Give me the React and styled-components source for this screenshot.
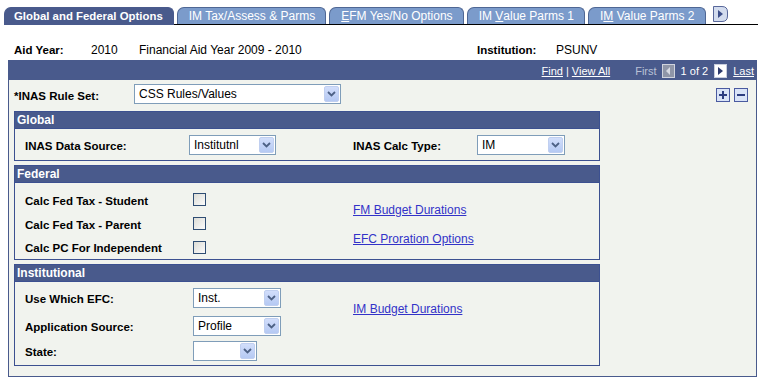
import React from 'react';
import styled, { createGlobalStyle } from 'styled-components';

const GlobalStyle = createGlobalStyle`
	body {
		margin: 0;
		background: #ffffff;
		font-family: Arial, 'Liberation Sans', sans-serif;
		color: #000;
	}
`;

const NAVY = '#495a8c';

const Page = styled.div`
	padding-top: 7px;
	width: 767px;
`;

const TabBar = styled.div`
	display: flex;
	align-items: flex-end;
	margin-left: 4px;
	width: 754px;
	height: 17px;
	border-bottom: 1px solid #000;
`;

const Tab = styled.div`
	box-sizing: border-box;
	height: ${({ $active }) => ($active ? '18px' : '17px')};
	margin-bottom: ${({ $active }) => ($active ? '-1px' : '0')};
	margin-right: 3px;
	display: flex;
	align-items: center;
	padding: ${({ $active }) => ($active ? '0 10px 1px 9px' : '0 10px 0 11px')};
	border: 1px solid ${({ $active }) => ($active ? NAVY : '#4f6794')};
	border-bottom: none;
	border-radius: 7px 6px 0 0;
	background: ${({ $active }) => ($active ? NAVY : '#7b9bcb')};
	color: #fff;
	font-size: ${({ $active }) => ($active ? '11.4px' : '12px')};
	font-weight: ${({ $active }) => ($active ? 'bold' : 'normal')};
	white-space: nowrap;

	u {
		text-decoration: underline;
	}
`;

const TabScroll = styled.div`
	margin: 0 0 2px 4px;
	display: flex;
`;

const InfoRow = styled.div`
	display: flex;
	align-items: center;
	height: 16px;
	margin-top: 17px;
	padding-left: 14px;
	font-size: 12px;
`;

const InfoLabel = styled.span`
	width: ${({ $w }) => $w}px;
	font-size: 11.5px;
	font-weight: bold;
`;

const InfoValue = styled.span`
	width: ${({ $w }) => ($w ? `${$w}px` : 'auto')};
`;

const Panel = styled.div`
	box-sizing: border-box;
	margin: 2px 0 0 8px;
	width: 749px;
	border: 1px solid ${NAVY};
	background: #f1f3ee;
`;

const PanelHeader = styled.div`
	height: 19px;
	background: ${NAVY};
	display: flex;
	align-items: center;
	justify-content: flex-end;
	padding-right: 2px;
	font-size: 11px;
	color: #fff;
	gap: 3px;

	a {
		color: #fff;
		text-decoration: underline;
	}
`;

const Muted = styled.span`
	color: #b9c1d6;
	margin-left: 22px;
	margin-right: 2px;
`;

const PanelBody = styled.div`
	padding: 4px 8px 10px 5px;
`;

const RuleRow = styled.div`
	display: flex;
	align-items: center;
	height: 20px;
`;

const RuleLabel = styled.span`
	width: 120px;
	font-size: 11.5px;
	font-weight: bold;
	padding-top: 3px;
`;

const RowIcons = styled.div`
	margin-left: auto;
	display: flex;
	gap: 4px;
	align-self: flex-start;
	margin-top: 4px;
`;

const Group = styled.div`
	width: 586px;
	box-sizing: border-box;
	border: 1px solid #3c5090;
	margin-top: ${({ $top }) => $top}px;
`;

const GroupHeader = styled.div`
	height: 16px;
	line-height: 16px;
	background: ${NAVY};
	border-bottom: 1px solid #3c5090;
	color: #fff;
	font-size: 12px;
	font-weight: bold;
	padding-left: 2px;
`;

const GroupBody = styled.div`
	display: flex;
	padding-left: 10px;
	height: ${({ $h }) => $h}px;
`;

const LeftCol = styled.div`
	width: 328px;
	display: flex;
	flex-direction: column;
	padding-top: ${({ $pt }) => $pt}px;
`;

const RightCol = styled.div`
	display: flex;
	flex-direction: column;
	align-items: flex-start;
	padding-top: ${({ $pt }) => $pt}px;
	gap: 15px;
`;

const Field = styled.div`
	display: flex;
	align-items: center;
	height: ${({ $h }) => $h || 20}px;
	margin-top: ${({ $mt }) => $mt || 0}px;
`;

const Label = styled.span`
	width: ${({ $w }) => $w}px;
	font-size: 11.5px;
	font-weight: bold;
	padding-top: 2px;
	white-space: nowrap;
`;

const SelectBox = styled.div`
	box-sizing: border-box;
	width: ${({ $w }) => $w}px;
	height: ${({ $h }) => $h || 20}px;
	border: 1px solid #7f9db9;
	background: #fff;
	display: flex;
	align-items: center;
	padding: 0 1px 0 4px;
	font-size: 12px;
`;

const SelectText = styled.span`
	flex: 1;
`;

const SelectButton = styled.span`
	width: 15px;
	height: 16px;
	border-radius: 2px;
	background: linear-gradient(#d2defb, #b5c9f3);
	border: 1px solid #c0cff0;
	box-sizing: border-box;
	display: flex;
	align-items: center;
	justify-content: center;
`;

const Checkbox = styled.span`
	box-sizing: border-box;
	width: 13px;
	height: 13px;
	border: 1px solid #2f4d73;
	background: linear-gradient(135deg, #dcdcd6, #fbfbfb);
`;

const Link = styled.a`
	color: #3232c8;
	text-decoration: underline;
	font-size: 12px;
	line-height: 14px;
	cursor: pointer;
`;

const Chevron = () => (
	<svg width="9" height="6" viewBox="0 0 9 6">
		<path d="M1 1 L4.5 4.5 L8 1" fill="none" stroke="#4d6185" strokeWidth="1.8" />
	</svg>
);

const Select = ({ value, w, h }) => (
	<SelectBox $w={w} $h={h}>
		<SelectText>{value}</SelectText>
		<SelectButton>
			<Chevron />
		</SelectButton>
	</SelectBox>
);

const NavArrow = ({ dir }) =>
	dir === 'left' ? (
		<svg width="13" height="14" viewBox="0 0 13 14">
			<rect x="0.5" y="0.5" width="12" height="13" fill="#8f96a8" stroke="#d0d4de" />
			<path d="M8 3 L4 7 L8 11 Z" fill="#d6d9e2" />
		</svg>
	) : (
		<svg width="13" height="14" viewBox="0 0 13 14">
			<rect x="0.5" y="0.5" width="12" height="13" fill="#ffffff" stroke="#c8cede" />
			<path d="M4 3 L9 7 L4 11 Z" fill="#2e3b6e" />
		</svg>
	);

const SquareIcon = ({ minus }) => (
	<svg width="14" height="14" viewBox="0 0 14 14">
		<rect x="0.5" y="0.5" width="13" height="13" fill="#d9e3f7" stroke="#4a5aa0" />
		<rect x="3" y="6" width="8" height="2" fill="#2c3d80" />
		{!minus && <rect x="6" y="3" width="2" height="8" fill="#2c3d80" />}
	</svg>
);

const ScrollArrow = () => (
	<svg width="15" height="16" viewBox="0 0 15 16">
		<path d="M0.5 0.5 H9 Q14.5 0.5 14.5 6 V10 Q14.5 15.5 9 15.5 H0.5 Z" fill="#d3dcee" stroke="#58679a" />
		<path d="M5 4 L10 8 L5 12 Z" fill="#3d4f8a" />
	</svg>
);

export default function App() {
	return (
		<Page>
			<GlobalStyle />
			<TabBar>
				<Tab $active>Global and Federal Options</Tab>
				<Tab>IM Tax/Assess &amp; Parms</Tab>
				<Tab>
					<u>E</u>FM Yes/No Options
				</Tab>
				<Tab>
					IM&nbsp;<u>V</u>alue Parms 1
				</Tab>
				<Tab>
					I<u>M</u>&nbsp;Value Parms 2
				</Tab>
				<TabScroll>
					<ScrollArrow />
				</TabScroll>
			</TabBar>

			<InfoRow>
				<InfoLabel $w={77}>Aid Year:</InfoLabel>
				<InfoValue $w={48}>2010</InfoValue>
				<InfoValue $w={338}>Financial Aid Year 2009 - 2010</InfoValue>
				<InfoLabel $w={79}>Institution:</InfoLabel>
				<InfoValue>PSUNV</InfoValue>
			</InfoRow>

			<Panel>
				<PanelHeader>
					<a>Find</a>|<a>View All</a>
					<Muted>First</Muted>
					<NavArrow dir="left" />
					<span>&nbsp;1 of 2&nbsp;</span>
					<NavArrow dir="right" />
					<a style={{ marginLeft: 3 }}>Last</a>
				</PanelHeader>
				<PanelBody>
					<RuleRow>
						<RuleLabel>*INAS Rule Set:</RuleLabel>
						<Select value="CSS Rules/Values" w={207} />
						<RowIcons>
							<SquareIcon />
							<SquareIcon minus />
						</RowIcons>
					</RuleRow>

					<Group $top={7}>
						<GroupHeader>Global</GroupHeader>
						<GroupBody $h={31}>
							<LeftCol $pt={6}>
								<Field>
									<Label $w={164}>INAS Data Source:</Label>
									<Select value="Institutnl" w={87} />
								</Field>
							</LeftCol>
							<RightCol $pt={6}>
								<Field>
									<Label $w={124}>INAS Calc Type:</Label>
									<Select value="IM" w={88} />
								</Field>
							</RightCol>
						</GroupBody>
					</Group>

					<Group $top={4}>
						<GroupHeader>Federal</GroupHeader>
						<GroupBody $h={76}>
							<LeftCol $pt={5}>
								<Field $h={24}>
									<Label $w={168}>Calc Fed Tax - Student</Label>
									<Checkbox />
								</Field>
								<Field $h={24}>
									<Label $w={168}>Calc Fed Tax - Parent</Label>
									<Checkbox />
								</Field>
								<Field $h={24}>
									<Label $w={168}>Calc PC For Independent</Label>
									<Checkbox />
								</Field>
							</LeftCol>
							<RightCol $pt={20}>
								<Link>FM Budget Durations</Link>
								<Link>EFC Proration Options</Link>
							</RightCol>
						</GroupBody>
					</Group>

					<Group $top={4}>
						<GroupHeader>Institutional</GroupHeader>
						<GroupBody $h={83}>
							<LeftCol $pt={6}>
								<Field>
									<Label $w={168}>Use Which EFC:</Label>
									<Select value="Inst." w={88} />
								</Field>
								<Field $mt={8}>
									<Label $w={168}>Application Source:</Label>
									<Select value="Profile" w={88} />
								</Field>
								<Field $mt={5}>
									<Label $w={168}>State:</Label>
									<Select value="" w={64} />
								</Field>
							</LeftCol>
							<RightCol $pt={20}>
								<Link>IM Budget Durations</Link>
							</RightCol>
						</GroupBody>
					</Group>
				</PanelBody>
			</Panel>
		</Page>
	);
}
